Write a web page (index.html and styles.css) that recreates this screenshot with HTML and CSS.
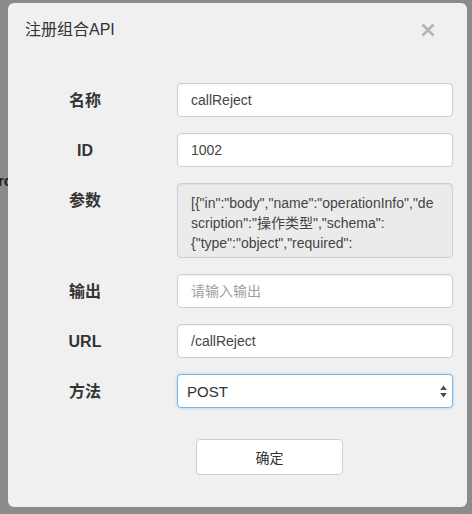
FILE: index.html
```html
<!DOCTYPE html>
<html lang="zh">
<head>
<meta charset="utf-8">
<title>注册组合API</title>
<link rel="stylesheet" href="styles.css">
</head>
<body>
<span class="behind">ro</span>
<div class="modal">
  <div class="modal-header">
    <h4 class="modal-title">注册组合API</h4>
    <button class="close" type="button" aria-label="关闭">
      <svg width="14" height="14" viewBox="0 0 14 14"><path d="M1.5 1.5 L12.5 12.5 M12.5 1.5 L1.5 12.5" stroke="#b3b3b3" stroke-width="2.6" stroke-linecap="butt"/></svg>
    </button>
  </div>
  <form class="modal-body">
    <div class="row">
      <label class="label">名称</label>
      <input class="field" type="text" value="callReject">
    </div>
    <div class="row">
      <label class="label">ID</label>
      <input class="field" type="text" value="1002">
    </div>
    <div class="row">
      <label class="label">参数</label>
      <textarea class="field area" disabled>[{"in":"body","name":"operationInfo","description":"操作类型","schema":{"type":"object","required":["operation"],"properties":{"operation":{"type":"string","description":"操作"}}}}]</textarea>
    </div>
    <div class="row">
      <label class="label">输出</label>
      <input class="field" type="text" placeholder="请输入输出">
    </div>
    <div class="row">
      <label class="label">URL</label>
      <input class="field" type="text" value="/callReject">
    </div>
    <div class="row">
      <label class="label">方法</label>
      <div class="select-wrap">
        <select class="field select">
          <option>POST</option>
          <option>GET</option>
        </select>
        <svg class="arrows" width="7" height="13" viewBox="0 0 7 13"><path d="M3.5 0.5 L6.8 5 L0.2 5 Z M3.5 12.5 L6.8 8 L0.2 8 Z" fill="#4a4a4a"/></svg>
      </div>
    </div>
    <div class="actions">
      <button class="btn" type="button">确定</button>
    </div>
  </form>
</div>
</body>
</html>
```
FILE: styles.css
```css
html, body {
  margin: 0;
  padding: 0;
}
body {
  width: 472px;
  height: 514px;
  background: #8b8b8b;
  font-family: "Liberation Sans", "Noto Sans CJK SC", sans-serif;
  color: #333;
  overflow: hidden;
  position: relative;
}
.behind {
  position: absolute;
  left: -2px;
  top: 172px;
  font-size: 15px;
  font-weight: bold;
  color: #1f1f1f;
}
.modal {
  position: relative;
  margin: 3px 0 0 8px;
  width: 459px;
  height: 504px;
  box-sizing: border-box;
  background: #f0f0f0;
  border-radius: 6px;
}
.modal-header {
  display: flex;
  align-items: center;
  justify-content: space-between;
  padding: 15px 32px 15px 17px;
}
.modal-title {
  margin: 0;
  font-size: 16px;
  line-height: 24px;
  font-weight: normal;
  color: #333;
}
.close {
  border: 0;
  background: none;
  padding: 0;
  width: 14px;
  height: 14px;
  display: block;
  margin-top: 0;
}
.close svg {
  display: block;
}
.modal-body {
  margin: 0;
  padding: 26px 14px 0 0;
  display: flex;
  flex-direction: column;
  gap: 16px;
}
.row {
  display: grid;
  grid-template-columns: 154px 1fr;
  column-gap: 15px;
  align-items: start;
}
.label {
  text-align: center;
  font-weight: bold;
  font-size: 16px;
  line-height: 32px;
  padding-top: 2px;
  color: #333;
}
.field {
  box-sizing: border-box;
  width: 276px;
  height: 34px;
  margin: 0;
  padding: 0 13px;
  border: 1px solid #cfcfcf;
  border-radius: 4px;
  background: #fff;
  box-shadow: inset 0 1px 1px rgba(0,0,0,0.05);
  font-family: "Liberation Sans", "Noto Sans CJK SC", sans-serif;
  font-size: 14px;
  color: #444;
  outline: none;
}
.field::placeholder {
  color: #a0a0a0;
}
.area {
  height: 75px;
  padding: 9px 15px 0 13px;
  line-height: 20px;
  resize: none;
  overflow: hidden;
  background: #ebebeb;
  color: #444;
  white-space: pre-wrap;
  overflow-wrap: break-word;
}
.select-wrap {
  position: relative;
  width: 276px;
}
.select {
  -webkit-appearance: none;
  appearance: none;
  padding: 0 9px;
  font-size: 15px;
  color: #333;
  border-color: #7fb3e6;
  box-shadow: 0 0 3px rgba(102,175,233,0.6);
}
.arrows {
  position: absolute;
  right: 6px;
  top: 11px;
  pointer-events: none;
}
.actions {
  padding: 15px 0 0 188px;
}
.btn {
  width: 147px;
  height: 36px;
  box-sizing: border-box;
  border: 1px solid #cfcfcf;
  border-radius: 4px;
  background: #fff;
  font-family: "Liberation Sans", "Noto Sans CJK SC", sans-serif;
  font-size: 14px;
  color: #333;
  padding: 0;
}
```
